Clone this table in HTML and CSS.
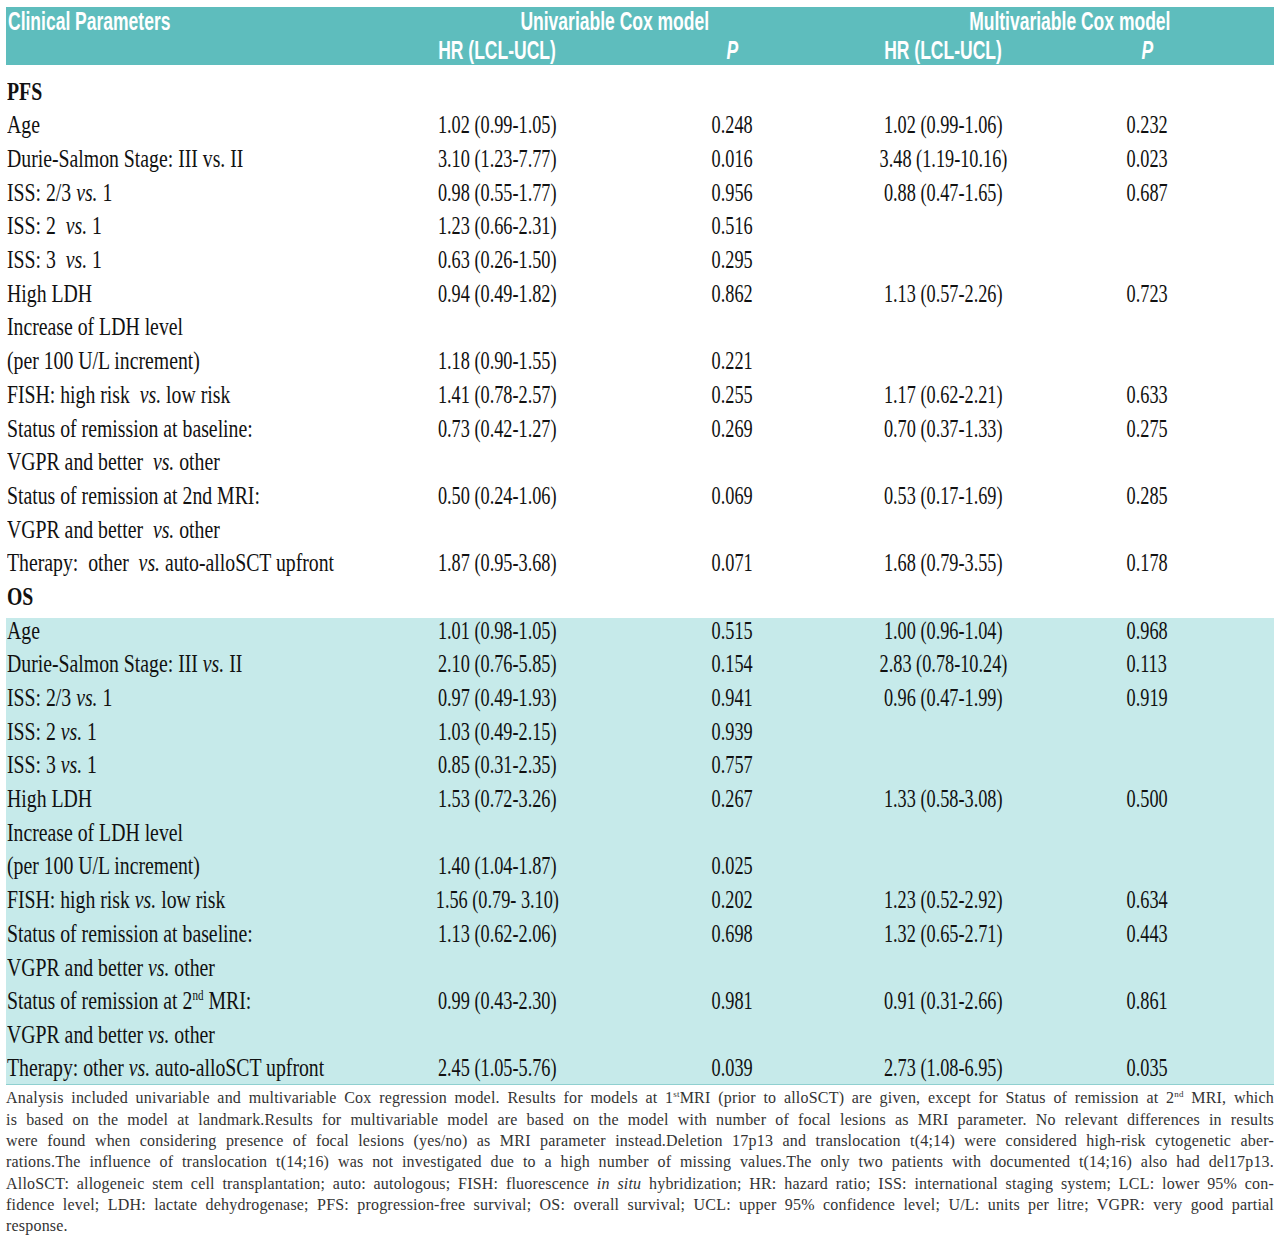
FILE: index.html
```html
<!DOCTYPE html>
<html lang="en">
<head>
<meta charset="utf-8">
<title>Cox regression</title>
<link rel="stylesheet" href="styles.css">
</head>
<body>
<table class="tbl">
  <colgroup><col class="c1"><col class="c2"><col class="c3"><col class="c4"><col class="c5"></colgroup>
  <thead>
    <tr>
      <th class="lft"><span class="hx">Clinical Parameters</span></th>
      <th colspan="2"><span class="hx">Univariable Cox model</span></th>
      <th colspan="2" class="mv"><span class="hx">Multivariable Cox model</span></th>
    </tr>
    <tr>
      <th></th>
      <th><span class="hx">HR (LCL-UCL)</span></th>
      <th><span class="hx"><i>P</i></span></th>
      <th><span class="hx">HR (LCL-UCL)</span></th>
      <th class="end"><span class="hx"><i>P</i></span></th>
    </tr>
  </thead>
  <tbody>
    <tr class="sec"><td class="lbl"><span class="sx">PFS</span></td><td></td><td></td><td></td><td></td></tr>
    <tr><td class="lbl"><span class="sx">Age</span></td><td><span class="sx">1.02 (0.99-1.05)</span></td><td><span class="sx">0.248</span></td><td><span class="sx">1.02 (0.99-1.06)</span></td><td><span class="sx">0.232</span></td></tr>
    <tr><td class="lbl"><span class="sx">Durie-Salmon Stage: III vs. II</span></td><td><span class="sx">3.10 (1.23-7.77)</span></td><td><span class="sx">0.016</span></td><td><span class="sx">3.48 (1.19-10.16)</span></td><td><span class="sx">0.023</span></td></tr>
    <tr><td class="lbl"><span class="sx">ISS: 2/3 <i>vs.</i> 1</span></td><td><span class="sx">0.98 (0.55-1.77)</span></td><td><span class="sx">0.956</span></td><td><span class="sx">0.88 (0.47-1.65)</span></td><td><span class="sx">0.687</span></td></tr>
    <tr><td class="lbl"><span class="sx">ISS: 2 &nbsp;<i>vs.</i> 1</span></td><td><span class="sx">1.23 (0.66-2.31)</span></td><td><span class="sx">0.516</span></td><td></td><td></td></tr>
    <tr><td class="lbl"><span class="sx">ISS: 3 &nbsp;<i>vs.</i> 1</span></td><td><span class="sx">0.63 (0.26-1.50)</span></td><td><span class="sx">0.295</span></td><td></td><td></td></tr>
    <tr><td class="lbl"><span class="sx">High LDH</span></td><td><span class="sx">0.94 (0.49-1.82)</span></td><td><span class="sx">0.862</span></td><td><span class="sx">1.13 (0.57-2.26)</span></td><td><span class="sx">0.723</span></td></tr>
    <tr><td class="lbl"><span class="sx">Increase of LDH level</span></td><td></td><td></td><td></td><td></td></tr>
    <tr><td class="lbl"><span class="sx">(per 100 U/L increment)</span></td><td><span class="sx">1.18 (0.90-1.55)</span></td><td><span class="sx">0.221</span></td><td></td><td></td></tr>
    <tr><td class="lbl"><span class="sx">FISH: high risk &nbsp;<i>vs.</i> low risk</span></td><td><span class="sx">1.41 (0.78-2.57)</span></td><td><span class="sx">0.255</span></td><td><span class="sx">1.17 (0.62-2.21)</span></td><td><span class="sx">0.633</span></td></tr>
    <tr><td class="lbl"><span class="sx">Status of remission at baseline:</span></td><td><span class="sx">0.73 (0.42-1.27)</span></td><td><span class="sx">0.269</span></td><td><span class="sx">0.70 (0.37-1.33)</span></td><td><span class="sx">0.275</span></td></tr>
    <tr><td class="lbl"><span class="sx">VGPR and better &nbsp;<i>vs.</i> other</span></td><td></td><td></td><td></td><td></td></tr>
    <tr><td class="lbl"><span class="sx">Status of remission at 2nd MRI:</span></td><td><span class="sx">0.50 (0.24-1.06)</span></td><td><span class="sx">0.069</span></td><td><span class="sx">0.53 (0.17-1.69)</span></td><td><span class="sx">0.285</span></td></tr>
    <tr><td class="lbl"><span class="sx">VGPR and better &nbsp;<i>vs.</i> other</span></td><td></td><td></td><td></td><td></td></tr>
    <tr><td class="lbl"><span class="sx">Therapy: &nbsp;other &nbsp;<i>vs.</i> auto-alloSCT upfront</span></td><td><span class="sx">1.87 (0.95-3.68)</span></td><td><span class="sx">0.071</span></td><td><span class="sx">1.68 (0.79-3.55)</span></td><td><span class="sx">0.178</span></td></tr>
    <tr class="bold"><td class="lbl"><span class="sx">OS</span></td><td></td><td></td><td></td><td></td></tr>
    <tr class="alt first"><td class="lbl"><span class="sx">Age</span></td><td><span class="sx">1.01 (0.98-1.05)</span></td><td><span class="sx">0.515</span></td><td><span class="sx">1.00 (0.96-1.04)</span></td><td><span class="sx">0.968</span></td></tr>
    <tr class="alt"><td class="lbl"><span class="sx">Durie-Salmon Stage: III <i>vs.</i> II</span></td><td><span class="sx">2.10 (0.76-5.85)</span></td><td><span class="sx">0.154</span></td><td><span class="sx">2.83 (0.78-10.24)</span></td><td><span class="sx">0.113</span></td></tr>
    <tr class="alt"><td class="lbl"><span class="sx">ISS: 2/3 <i>vs.</i> 1</span></td><td><span class="sx">0.97 (0.49-1.93)</span></td><td><span class="sx">0.941</span></td><td><span class="sx">0.96 (0.47-1.99)</span></td><td><span class="sx">0.919</span></td></tr>
    <tr class="alt"><td class="lbl"><span class="sx">ISS: 2 <i>vs.</i> 1</span></td><td><span class="sx">1.03 (0.49-2.15)</span></td><td><span class="sx">0.939</span></td><td></td><td></td></tr>
    <tr class="alt"><td class="lbl"><span class="sx">ISS: 3 <i>vs.</i> 1</span></td><td><span class="sx">0.85 (0.31-2.35)</span></td><td><span class="sx">0.757</span></td><td></td><td></td></tr>
    <tr class="alt"><td class="lbl"><span class="sx">High LDH</span></td><td><span class="sx">1.53 (0.72-3.26)</span></td><td><span class="sx">0.267</span></td><td><span class="sx">1.33 (0.58-3.08)</span></td><td><span class="sx">0.500</span></td></tr>
    <tr class="alt"><td class="lbl"><span class="sx">Increase of LDH level</span></td><td></td><td></td><td></td><td></td></tr>
    <tr class="alt"><td class="lbl"><span class="sx">(per 100 U/L increment)</span></td><td><span class="sx">1.40 (1.04-1.87)</span></td><td><span class="sx">0.025</span></td><td></td><td></td></tr>
    <tr class="alt"><td class="lbl"><span class="sx">FISH: high risk <i>vs.</i> low risk</span></td><td><span class="sx">1.56 (0.79- 3.10)</span></td><td><span class="sx">0.202</span></td><td><span class="sx">1.23 (0.52-2.92)</span></td><td><span class="sx">0.634</span></td></tr>
    <tr class="alt"><td class="lbl"><span class="sx">Status of remission at baseline:</span></td><td><span class="sx">1.13 (0.62-2.06)</span></td><td><span class="sx">0.698</span></td><td><span class="sx">1.32 (0.65-2.71)</span></td><td><span class="sx">0.443</span></td></tr>
    <tr class="alt"><td class="lbl"><span class="sx">VGPR and better <i>vs.</i> other</span></td><td></td><td></td><td></td><td></td></tr>
    <tr class="alt"><td class="lbl"><span class="sx">Status of remission at 2<sup>nd</sup> MRI:</span></td><td><span class="sx">0.99 (0.43-2.30)</span></td><td><span class="sx">0.981</span></td><td><span class="sx">0.91 (0.31-2.66)</span></td><td><span class="sx">0.861</span></td></tr>
    <tr class="alt"><td class="lbl"><span class="sx">VGPR and better <i>vs.</i> other</span></td><td></td><td></td><td></td><td></td></tr>
    <tr class="alt last"><td class="lbl"><span class="sx">Therapy: other <i>vs.</i> auto-alloSCT upfront</span></td><td><span class="sx">2.45 (1.05-5.76)</span></td><td><span class="sx">0.039</span></td><td><span class="sx">2.73 (1.08-6.95)</span></td><td><span class="sx">0.035</span></td></tr>
  </tbody>
</table>
<p class="note">
  <span class="ln">Analysis included univariable and multivariable Cox regression model. Results for models at 1<sup>st</sup>MRI (prior to alloSCT) are given, except for Status of remission at 2<sup>nd</sup> MRI, which</span>
  <span class="ln">is based on the model at landmark.Results for multivariable model are based on the model with number of focal lesions as MRI parameter. No relevant differences in results</span>
  <span class="ln">were found when considering presence of focal lesions (yes/no) as MRI parameter instead.Deletion 17p13 and translocation t(4;14) were considered high-risk cytogenetic aber-</span>
  <span class="ln">rations.The influence of translocation t(14;16) was not investigated due to a high number of missing values.The only two patients with documented t(14;16) also had del17p13.</span>
  <span class="ln">AlloSCT: allogeneic stem cell transplantation; auto: autologous; FISH: fluorescence <i>in situ</i> hybridization; HR: hazard ratio; ISS: international staging system; LCL: lower 95% con-</span>
  <span class="ln">fidence level; LDH: lactate dehydrogenase; PFS: progression-free survival; OS: overall survival; UCL: upper 95% confidence level; U/L: units per litre; VGPR: very good partial</span>
  <span class="ln end">response.</span>
</p>
</body>
</html>
```

FILE: styles.css
```css
* { box-sizing: border-box; }
html, body { margin: 0; background: #fff; }
body { padding: 7px 6px 0 6px; }

.tbl {
  width: 1268px;
  border-collapse: collapse;
  border-spacing: 0;
  table-layout: fixed;
  font-family: "Liberation Serif", "Times New Roman", serif;
  color: #111;
}
.c1 { width: 374px; }
.c2 { width: 234px; }
.c3 { width: 236px; }
.c4 { width: 186px; }
.c5 { width: 238px; }

thead { background: #5ebdbd; color: #fff; }
thead th {
  font-family: "Liberation Sans", Arial, sans-serif;
  font-weight: 700;
  font-size: 25px;
  height: 29px;
  line-height: 29px;
  padding: 0;
  text-align: center;
  white-space: nowrap;
  overflow: visible;
}
thead th.lft { text-align: left; padding-left: 2px; }
thead th.mv { padding-left: 16px; }
thead th.end { padding-right: 16px; }
.hx {
  display: inline-block;
  transform: scaleX(0.7);
  margin: 0 -60px;
}
th.lft .hx { transform-origin: 0 50%; margin: 0; }

tbody td {
  font-size: 25px;
  height: 33.7px;
  line-height: 1;
  padding: 0;
  text-align: center;
  vertical-align: middle;
  white-space: nowrap;
  overflow: visible;
}
tbody td:last-child { padding-right: 16px; }
tbody td.lbl { text-align: left; padding-left: 1px; }
.sx {
  display: inline-block;
  transform: scaleX(0.73);
  margin: 0 -50px;
}
td.lbl .sx { transform: scaleX(0.79); transform-origin: 0 50%; margin: 0; }
.sx sup { font-size: 14px; line-height: 0; }

tr.sec td { height: 43px; padding-top: 9px; font-weight: 700; }
tr.bold td { font-weight: 700; height: 38.7px; padding-bottom: 5px; }
tr.alt td { background: #c6eaea; }
tr.first td { height: 28.7px; padding-bottom: 3.7px; }
tr.last td { border-bottom: 1px solid #8fd0d0; }

.note {
  margin: 2px 0 0 0;
  width: 1268px;
  font-family: "Liberation Serif", "Times New Roman", serif;
  font-size: 16px;
  line-height: 21.3px;
  letter-spacing: 0.2px;
  color: #333;
  text-align: justify;
}
.ln { display: block; text-align-last: justify; }
.ln.end { text-align-last: left; }
.note sup { font-size: 9px; line-height: 0; }
```
